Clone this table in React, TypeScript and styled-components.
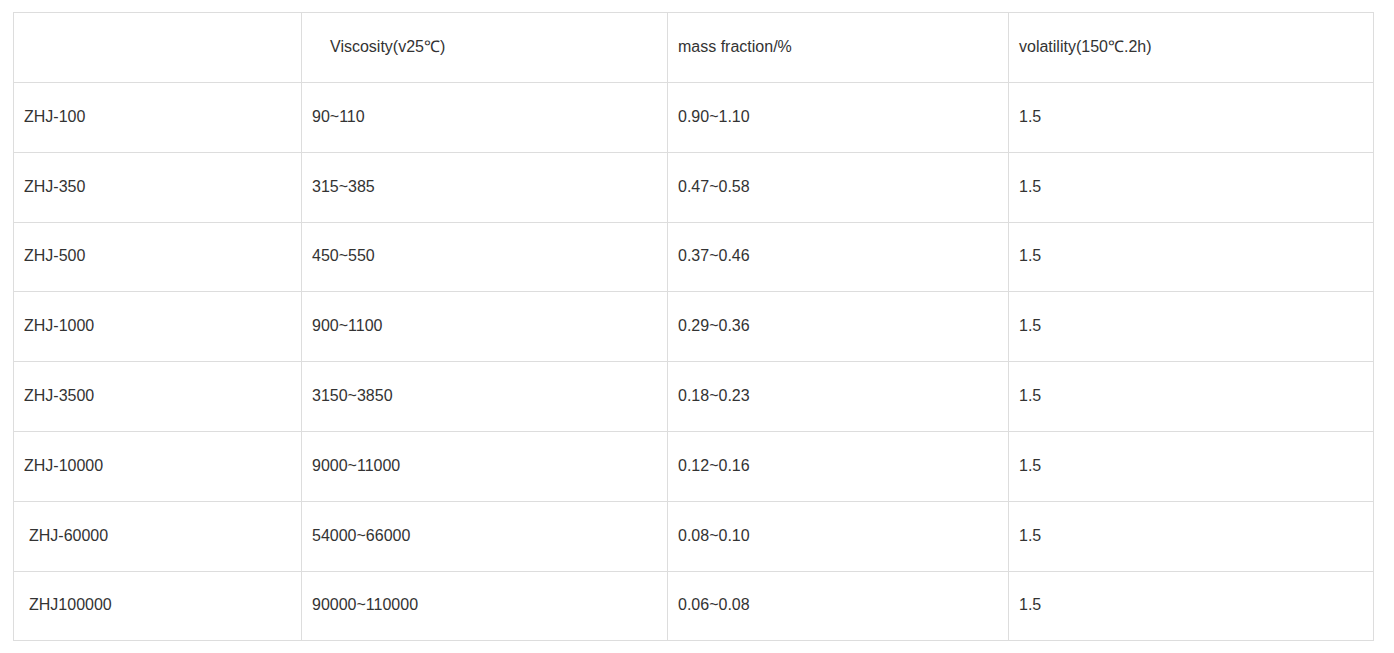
import React from "react";
import styled, { createGlobalStyle } from "styled-components";

const Global = createGlobalStyle`
  body {
    margin: 0;
    background: #ffffff;
    font-family: "Liberation Sans", Arial, sans-serif;
  }
`;

const Page = styled.div`
  padding: 12px 0 0 13px;
`;

const Table = styled.table`
  border-collapse: collapse;
  table-layout: fixed;
  width: 1360px;
  font-family: "Liberation Sans", Arial, sans-serif;
  font-size: 16px;
  color: #333333;
`;

const Row = styled.tr<{ $head?: boolean }>`
  height: ${(p) => (p.$head ? "70px" : "69.8px")};
`;

const Cell = styled.td<{ $indent?: number }>`
  border: 1px solid #dddddd;
  padding: 0 10px 1px ${(p) => 10 + (p.$indent ?? 0)}px;
  vertical-align: middle;
  white-space: nowrap;
  line-height: 20px;
`;

const widths = [288, 366, 341, 365];

type R = { cells: string[]; indent?: number[] };

const rows: R[] = [
  { cells: ["ZHJ-100", "90~110", "0.90~1.10", "1.5"] },
  { cells: ["ZHJ-350", "315~385", "0.47~0.58", "1.5"] },
  { cells: ["ZHJ-500", "450~550", "0.37~0.46", "1.5"] },
  { cells: ["ZHJ-1000", "900~1100", "0.29~0.36", "1.5"] },
  { cells: ["ZHJ-3500", "3150~3850", "0.18~0.23", "1.5"] },
  { cells: ["ZHJ-10000", "9000~11000", "0.12~0.16", "1.5"] },
  { cells: ["ZHJ-60000", "54000~66000", "0.08~0.10", "1.5"], indent: [5, 0, 0, 0] },
  { cells: ["ZHJ100000", "90000~110000", "0.06~0.08", "1.5"], indent: [5, 0, 0, 0] },
];

export default function App() {
  return (
    <>
      <Global />
      <Page>
        <Table>
          <colgroup>
            {widths.map((w, i) => (
              <col key={i} style={{ width: w }} />
            ))}
          </colgroup>
          <tbody>
            <Row $head>
              <Cell />
              <Cell $indent={18}>Viscosity(v25℃)</Cell>
              <Cell>mass fraction/%</Cell>
              <Cell>volatility(150℃.2h)</Cell>
            </Row>
            {rows.map((r, i) => (
              <Row key={i}>
                {r.cells.map((c, j) => (
                  <Cell key={j} $indent={r.indent ? r.indent[j] : 0}>
                    {c}
                  </Cell>
                ))}
              </Row>
            ))}
          </tbody>
        </Table>
      </Page>
    </>
  );
}
